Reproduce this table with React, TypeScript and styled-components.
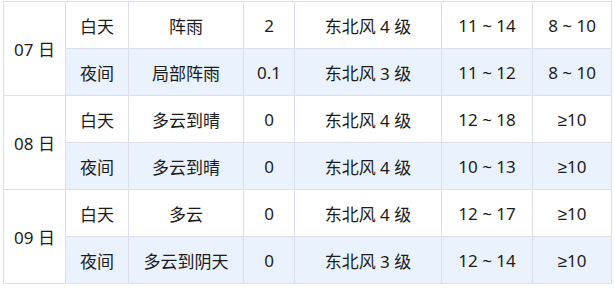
import styled, { createGlobalStyle } from 'styled-components'

type Period = {
	label: string
	weather: string
	rain: string
	wind: string
	temp: string
	vis: string
}

type Day = { date: string; periods: Period[] }

const DAYS: Day[] = [
	{
		date: '07 日',
		periods: [
			{ label: '白天', weather: '阵雨', rain: '2', wind: '东北风 4 级', temp: '11 ~ 14', vis: '8 ~ 10' },
			{ label: '夜间', weather: '局部阵雨', rain: '0.1', wind: '东北风 3 级', temp: '11 ~ 12', vis: '8 ~ 10' }
		]
	},
	{
		date: '08 日',
		periods: [
			{ label: '白天', weather: '多云到晴', rain: '0', wind: '东北风 4 级', temp: '12 ~ 18', vis: '≥10' },
			{ label: '夜间', weather: '多云到晴', rain: '0', wind: '东北风 4 级', temp: '10 ~ 13', vis: '≥10' }
		]
	},
	{
		date: '09 日',
		periods: [
			{ label: '白天', weather: '多云', rain: '0', wind: '东北风 4 级', temp: '12 ~ 17', vis: '≥10' },
			{ label: '夜间', weather: '多云到阴天', rain: '0', wind: '东北风 3 级', temp: '12 ~ 14', vis: '≥10' }
		]
	}
]

const COLS = [62, 63, 115, 51, 147, 91, 79]

const GlobalStyle = createGlobalStyle`
	html, body {
		margin: 0;
		background: #ffffff;
	}
`

const Page = styled.div`
	padding: 1px 0 0 3px;
`

const Table = styled.table`
	border-collapse: collapse;
	table-layout: fixed;
	width: 609px;
	font-family: 'Noto Sans', 'Liberation Sans', 'DejaVu Sans', 'Noto Sans CJK SC', sans-serif;
	font-size: 17px;
	color: #1c1c1c;
`

const Row = styled.tr<{ $night?: boolean }>`
	height: 47px;
	background: ${({ $night }) => ($night ? '#e9f2fd' : '#ffffff')};
`

const Cell = styled.td`
	border: 1px solid #dcdfea;
	text-align: center;
	vertical-align: middle;
	padding: 0;
	white-space: nowrap;
`

const DateCell = styled(Cell)`
	background: #ffffff;
`

const App = () => {
	return (
		<>
			<GlobalStyle />
			<Page>
				<Table>
					<colgroup>
						{COLS.map((w, i) => (
							<col key={i} style={{ width: w }} />
						))}
					</colgroup>
					<tbody>
						{DAYS.map((day) =>
							day.periods.map((p, i) => (
								<Row key={day.date + p.label} $night={i === 1}>
									{i === 0 && <DateCell rowSpan={2}>{day.date}</DateCell>}
									<Cell>{p.label}</Cell>
									<Cell>{p.weather}</Cell>
									<Cell>{p.rain}</Cell>
									<Cell>{p.wind}</Cell>
									<Cell>{p.temp}</Cell>
									<Cell>{p.vis}</Cell>
								</Row>
							))
						)}
					</tbody>
				</Table>
			</Page>
		</>
	)
}

export default App
